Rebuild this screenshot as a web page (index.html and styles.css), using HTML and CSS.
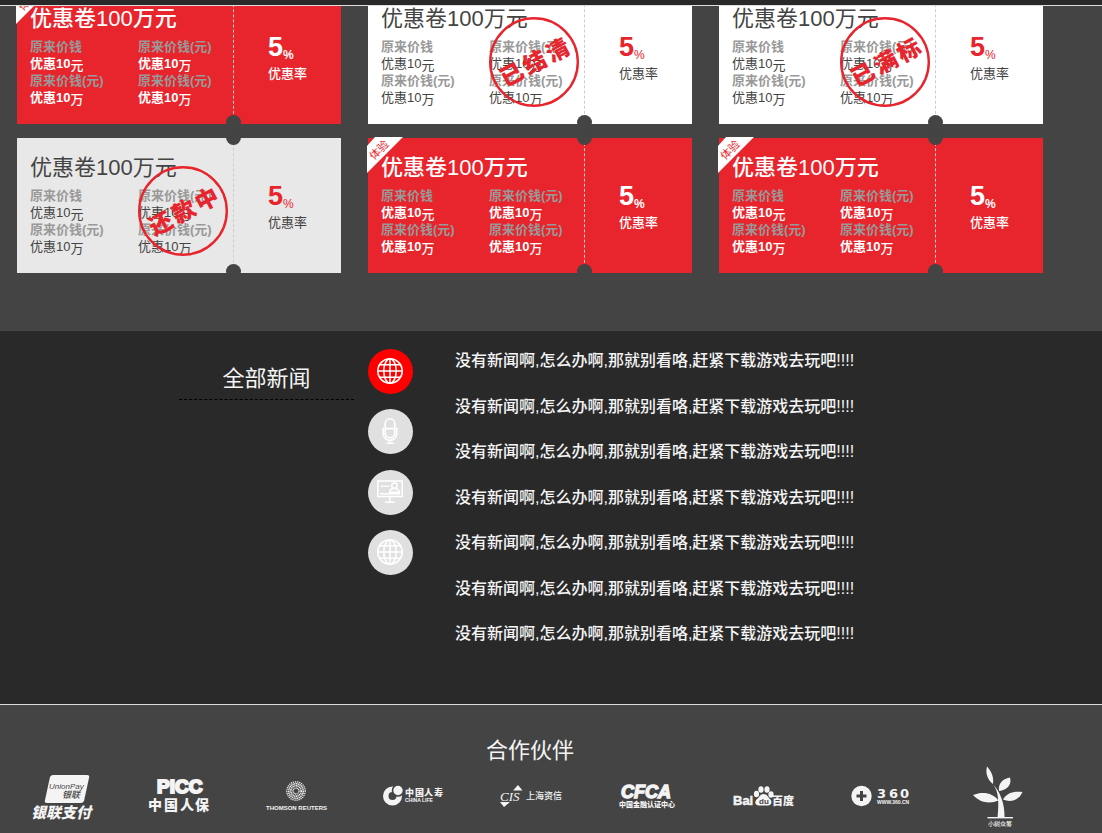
FILE: index.html
```html
<!DOCTYPE html>
<html lang="zh-CN">
<head>
<meta charset="utf-8">
<meta name="viewport" content="width=device-width, initial-scale=1">
<title>优惠卷</title>
<link rel="stylesheet" href="styles.css">
</head>
<body>
<svg class="defs" aria-hidden="true">
  <symbol id="globe" viewBox="0 0 26 26">
    <g fill="none" stroke="currentColor" stroke-width="1.6">
      <circle cx="13" cy="13" r="12.2"/>
      <ellipse cx="13" cy="13" rx="6.2" ry="12.2"/>
      <path d="M13 1v24M1 13h24M3 6.8h20M3 19.2h20"/>
    </g>
  </symbol>
</svg>
<header class="topbar"></header>
<main>
  <section class="coupons">
    <div class="coupon-grid">
      <article class="coupon coupon-red">
        <svg class="ribbon" viewBox="0 0 36 36"><path d="M8 0H36L0 36V9Z" fill="#fff"/><text x="12" y="17" transform="rotate(-45 12 13)">体验</text></svg>
        <div class="coupon-main">
          <h3>优惠卷100万元</h3>
          <dl>
            <div><dt>原来价钱</dt><dd>优惠10<sub>元</sub></dd></div>
            <div><dt>原来价钱(元)</dt><dd>优惠10<sub>万</sub></dd></div>
            <div><dt>原来价钱(元)</dt><dd>优惠10<sub>万</sub></dd></div>
            <div><dt>原来价钱(元)</dt><dd>优惠10<sub>万</sub></dd></div>
          </dl>
        </div>
        <div class="coupon-rate"><p class="rate">5<small>%</small></p><p>优惠率</p></div>
      </article>
      <article class="coupon">
        <div class="coupon-main">
          <h3>优惠卷100万元</h3>
          <dl>
            <div><dt>原来价钱</dt><dd>优惠10<sub>元</sub></dd></div>
            <div><dt>原来价钱(元)</dt><dd>优惠10<sub>万</sub></dd></div>
            <div><dt>原来价钱(元)</dt><dd>优惠10<sub>万</sub></dd></div>
            <div><dt>原来价钱(元)</dt><dd>优惠10<sub>万</sub></dd></div>
          </dl>
        </div>
        <div class="coupon-rate"><p class="rate">5<small>%</small></p><p>优惠率</p></div>
        <svg class="stamp" viewBox="0 0 90 90"><circle cx="45" cy="45" r="43.8"/><text x="8 34 60" y="54" transform="rotate(-28 45 45)">已结清</text></svg>
      </article>
      <article class="coupon">
        <div class="coupon-main">
          <h3>优惠卷100万元</h3>
          <dl>
            <div><dt>原来价钱</dt><dd>优惠10<sub>元</sub></dd></div>
            <div><dt>原来价钱(元)</dt><dd>优惠10<sub>万</sub></dd></div>
            <div><dt>原来价钱(元)</dt><dd>优惠10<sub>万</sub></dd></div>
            <div><dt>原来价钱(元)</dt><dd>优惠10<sub>万</sub></dd></div>
          </dl>
        </div>
        <div class="coupon-rate"><p class="rate">5<small>%</small></p><p>优惠率</p></div>
        <svg class="stamp" viewBox="0 0 90 90"><circle cx="45" cy="45" r="43.8"/><text x="8 34 60" y="54" transform="rotate(-28 45 45)">已满标</text></svg>
      </article>
      <article class="coupon coupon-gray">
        <div class="coupon-main">
          <h3>优惠卷100万元</h3>
          <dl>
            <div><dt>原来价钱</dt><dd>优惠10<sub>元</sub></dd></div>
            <div><dt>原来价钱(元)</dt><dd>优惠10<sub>万</sub></dd></div>
            <div><dt>原来价钱(元)</dt><dd>优惠10<sub>万</sub></dd></div>
            <div><dt>原来价钱(元)</dt><dd>优惠10<sub>万</sub></dd></div>
          </dl>
        </div>
        <div class="coupon-rate"><p class="rate">5<small>%</small></p><p>优惠率</p></div>
        <svg class="stamp" viewBox="0 0 90 90"><circle cx="45" cy="45" r="43.8"/><text x="8 34 60" y="54" transform="rotate(-28 45 45)">还款中</text></svg>
      </article>
      <article class="coupon coupon-red">
        <svg class="ribbon" viewBox="0 0 36 36"><path d="M8 0H36L0 36V9Z" fill="#fff"/><text x="12" y="17" transform="rotate(-45 12 13)">体验</text></svg>
        <div class="coupon-main">
          <h3>优惠卷100万元</h3>
          <dl>
            <div><dt>原来价钱</dt><dd>优惠10<sub>元</sub></dd></div>
            <div><dt>原来价钱(元)</dt><dd>优惠10<sub>万</sub></dd></div>
            <div><dt>原来价钱(元)</dt><dd>优惠10<sub>万</sub></dd></div>
            <div><dt>原来价钱(元)</dt><dd>优惠10<sub>万</sub></dd></div>
          </dl>
        </div>
        <div class="coupon-rate"><p class="rate">5<small>%</small></p><p>优惠率</p></div>
      </article>
      <article class="coupon coupon-red">
        <svg class="ribbon" viewBox="0 0 36 36"><path d="M8 0H36L0 36V9Z" fill="#fff"/><text x="12" y="17" transform="rotate(-45 12 13)">体验</text></svg>
        <div class="coupon-main">
          <h3>优惠卷100万元</h3>
          <dl>
            <div><dt>原来价钱</dt><dd>优惠10<sub>元</sub></dd></div>
            <div><dt>原来价钱(元)</dt><dd>优惠10<sub>万</sub></dd></div>
            <div><dt>原来价钱(元)</dt><dd>优惠10<sub>万</sub></dd></div>
            <div><dt>原来价钱(元)</dt><dd>优惠10<sub>万</sub></dd></div>
          </dl>
        </div>
        <div class="coupon-rate"><p class="rate">5<small>%</small></p><p>优惠率</p></div>
      </article>
    </div>
  </section>

  <section class="news">
    <h2 class="news-title">全部新闻</h2>
    <nav class="news-tabs">
      <button class="tab tab-active" type="button" aria-label="全部新闻"><svg><use href="#globe"/></svg></button>
      <button class="tab" type="button" aria-label="语音">
        <svg viewBox="0 0 26 26"><g fill="none" stroke="currentColor" stroke-width="1.6"><rect x="8.2" y=".8" width="9.6" height="19" rx="4.8"/><path d="M8.2 10.6h9.6M6.2 9.4v6.2a6.8 6.8 0 0 0 13.6 0V9.4M13 22v3M9.4 25.2h7.2"/></g></svg>
      </button>
      <button class="tab" type="button" aria-label="视频">
        <svg viewBox="0 0 26 26"><g fill="none" stroke="currentColor" stroke-width="1.5"><path d="M.8 2h24.4v15.4H.8zM3 14.8h20M13 17.4v5.4M8 23.2h10"/><circle cx="17.4" cy="6.6" r="2.7"/><path d="M12.6 13.2c0-5 9.6-5 9.6 0z"/><path d="M4 7.2h8.5" stroke-dasharray="2 .4"/></g></svg>
      </button>
      <button class="tab" type="button" aria-label="国际"><svg><use href="#globe"/></svg></button>
    </nav>
    <ul class="news-list">
      <li><a href="#">没有新闻啊,怎么办啊,那就别看咯,赶紧下载游戏去玩吧!!!!</a></li>
      <li><a href="#">没有新闻啊,怎么办啊,那就别看咯,赶紧下载游戏去玩吧!!!!</a></li>
      <li><a href="#">没有新闻啊,怎么办啊,那就别看咯,赶紧下载游戏去玩吧!!!!</a></li>
      <li><a href="#">没有新闻啊,怎么办啊,那就别看咯,赶紧下载游戏去玩吧!!!!</a></li>
      <li><a href="#">没有新闻啊,怎么办啊,那就别看咯,赶紧下载游戏去玩吧!!!!</a></li>
      <li><a href="#">没有新闻啊,怎么办啊,那就别看咯,赶紧下载游戏去玩吧!!!!</a></li>
      <li><a href="#">没有新闻啊,怎么办啊,那就别看咯,赶紧下载游戏去玩吧!!!!</a></li>
    </ul>
  </section>
</main>

<footer class="partners">
  <h2>合作伙伴</h2>
  <div class="logos">
    <svg viewBox="0 0 70 66" role="img" aria-label="银联支付">
      <path d="M26 9H60Q63 9 62 12L57 35Q56 37 54 37H20Q17 37 18 34L23 11Q24 9 26 9Z"/>
      <text class="ink" x="22" y="23" font-size="8" font-style="italic">UnionPay</text>
      <text class="ink" x="35" y="32" font-size="9" font-weight="500" font-style="italic">银联</text>
      <text x="4" y="52" font-size="15" font-weight="900" font-style="italic">银联支付</text>
    </svg>
    <svg viewBox="0 0 70 66" role="img" aria-label="中国人保">
      <text class="heavy" x="13" y="27" font-size="19" font-weight="700" stroke-width="2">PICC</text>
      <text x="4 20 36 51" y="44" font-size="14" font-weight="900">中国人保</text>
    </svg>
    <svg viewBox="0 0 70 66" role="img" aria-label="Thomson Reuters">
      <g fill="none" stroke="#f4f4f4">
        <circle cx="35" cy="25" r="9.2" stroke-width="1.2" stroke-dasharray="1.3 .8"/>
        <circle cx="35" cy="25" r="7.3" stroke-width="1.5" stroke-dasharray="1.3 .5"/>
        <circle cx="35" cy="25" r="5.2" stroke-width="1.6" stroke-dasharray="1.2 .5"/>
        <circle cx="35" cy="25" r="3" stroke-width="1.3" stroke-dasharray="1 .5"/>
      </g>
      <text x="5" y="44" font-size="6" font-weight="700">THOMSON REUTERS</text>
    </svg>
    <svg viewBox="0 0 70 66" role="img" aria-label="中国人寿">
      <path fill-rule="evenodd" d="M14.500 20.500a9.500 9.500 0 1 0 0 19a9.500 9.500 0 1 0 0-19M14.500 26a4 4 0 1 1 0 8a4 4 0 1 1 0-8"/>
      <circle cx="20" cy="24.500" r="5.500" stroke="#444" stroke-width="1.6"/>
      <text x="27 37 46 56" y="30" font-size="9" font-weight="900">中国人寿</text>
      <text x="27" y="36" font-size="5" font-weight="700">CHINA LIFE</text>
    </svg>
    <svg viewBox="0 0 70 66" role="img" aria-label="上海资信">
      <path d="M18 24.500L23 19L27.500 24.500ZM5 36H15L9 41Z"/>
      <text class="serif" x="5" y="35" font-size="13" font-style="italic">CIS</text>
      <text x="31" y="33" font-size="9" font-weight="500">上海资信</text>
    </svg>
    <svg viewBox="0 0 70 66" role="img" aria-label="中国金融认证中心">
      <text class="heavy" x="9" y="32" font-size="18" font-weight="700" font-style="italic" stroke-width="1.4">CFCA</text>
      <text x="35" y="41" text-anchor="middle" font-size="7" font-weight="900">中国金融认证中心</text>
    </svg>
    <svg viewBox="0 0 70 66" role="img" aria-label="百度">
      <text class="heavy" x="4" y="39" font-size="13" font-weight="700" stroke-width=".5">Bai</text>
      <ellipse cx="27.500" cy="28" rx="2.600" ry="3.200"/><ellipse cx="32" cy="23.500" rx="2.600" ry="3.200"/>
      <ellipse cx="38" cy="23.500" rx="2.600" ry="3.200"/><ellipse cx="42" cy="28.500" rx="2.600" ry="3.200"/>
      <path d="M34.500 28C38 28 39 31 41 33C44 36 42 39.500 39 39.500H30C26 39.500 25 36 28 33C31 31 31 28 34.500 28Z"/>
      <text class="ink" x="30" y="38" font-size="8" font-weight="700">du</text>
      <text x="43" y="39" font-size="11" font-weight="900">百度</text>
    </svg>
    <svg viewBox="0 0 70 66" role="img" aria-label="360">
      <circle cx="15.500" cy="30" r="10.200"/>
      <path d="M15.500 25v10M10.500 30h10" stroke="#444" stroke-width="3"/>
      <text class="wide" x="31 43 54" y="32" font-size="13" font-weight="700">360</text>
      <text x="31" y="38" font-size="5" font-weight="700">WWW.360.CN</text>
    </svg>
    <svg viewBox="0 0 70 66" role="img" aria-label="小树众筹">
      <path d="M24 .5C28 5 31 10 30 18C25 14 22 8 24 .5Z"/>
      <path d="M47 11.500C49 19 44 24 36 25C35 18 39 13 47 11.500Z"/>
      <path d="M10 29C20 25 30 27 35.500 34.500C27 38 17 37 10 29Z"/>
      <path d="M59.500 26C56 34 48 37 40 33.500C44 27 50 25 59.500 26Z"/>
      <path d="M30 18.500C36 25 36 38 34.500 51.500H41.500C42 38 37 25 30 18.500Z"/>
      <path d="M24.500 51h25.500v1.400H24.500z"/>
      <text x="37" y="60" text-anchor="middle" font-size="6" font-weight="500">小树众筹</text>
    </svg>
  </div>
</footer>
</body>
</html>
```
FILE: styles.css
```css
* { box-sizing: border-box; }
body, h2, h3, p, dl, dd, ul { margin: 0; padding: 0; }
body {
  background: #444;
  color: #444;
  font: 13px/17px "Liberation Sans", "Noto Sans CJK SC", sans-serif;
}
h2, h3 { font-size: 22px; line-height: 30px; font-weight: 400; }
ul { list-style: none; }
.defs { position: absolute; width: 0; height: 0; }

.topbar {
  height: 6px;
  background: #292929;
  border-bottom: 1px solid #ddd;
}

/* Coupons: the list is scrolled partly under the top bar */
.coupons { overflow: hidden; padding: 0 59px 58px 17px; }
.coupon-grid {
  display: grid;
  grid-template-columns: repeat(3, 1fr);
  gap: 14px 27px;
  margin-top: -17px;
}
.coupon {
  position: relative;
  display: grid;
  grid-template-columns: 2fr 1fr;
  min-height: 135px;
  background: #fff;
}
.coupon-gray { background: #e8e8e8; }
.coupon-red { background: #e8242c; color: #fff; }
.coupon-main { padding: 15px 0 0 13px; }
.coupon-main dl {
  display: grid;
  grid-template-columns: 108px 1fr;
  margin-top: 4px;
}
.coupon dt { font-weight: 700; color: #999; }
.coupon-red h3, .coupon-red p { font-weight: 500; }
.coupon-red dd { font-weight: 700; }
.coupon sub { font-size: 13px; font-weight: 400; line-height: 0; vertical-align: -2px; }
.coupon-red sub { font-weight: 500; }
.coupon-rate {
  position: relative;
  padding: 42px 0 0 34px;
  border-left: 1px dashed #ccc;
}
.coupon-rate::before,
.coupon-rate::after {
  content: "";
  position: absolute;
  left: -8px;
  width: 15px;
  height: 15px;
  border-radius: 50%;
  background: #444;
}
.coupon-rate::before { top: -8px; }
.coupon-rate::after { bottom: -6px; }
.coupon .rate {
  margin-bottom: 2px;
  color: #e8242c;
  font-size: 27px;
  line-height: 32px;
  font-weight: 700;
}
.rate small { font-size: 12px; font-weight: 400; vertical-align: -3px; line-height: 0; }
.coupon-red .rate { color: #fff; }
.coupon-red .rate small { font-weight: 700; }
.ribbon { position: absolute; top: -1px; left: -1px; width: 36px; height: 36px; }
.ribbon text { font-size: 11px; fill: #e8242c; text-anchor: middle; }
.stamp { position: absolute; top: 28px; left: 121px; width: 90px; height: 90px; }
.stamp circle { fill: none; stroke: #e8242c; stroke-width: 2.4; }
.stamp text { font-size: 23px; font-weight: 900; fill: #e8242c; }

/* News */
.news {
  display: grid;
  grid-template-columns: 175px 45px 1fr;
  column-gap: 14px;
  align-items: start;
  padding: 18px 17px 58px 179px;
  background: #292929;
  color: #f4f4f4;
}
.news-title {
  margin-top: 15px;
  padding-bottom: 5px;
  border-bottom: 1px dashed #000;
  text-align: center;
}
.news-tabs {
  display: flex;
  flex-direction: column;
  justify-content: space-between;
  min-height: 226px;
}
.tab {
  display: grid;
  place-items: center;
  width: 45px;
  height: 45px;
  padding: 0 1px 1px 0;
  border: 0;
  border-radius: 50%;
  background: #e0e0e0;
  color: #fff;
}
.tab-active { background: #f00; }
.tab svg { width: 26px; height: 26px; }
.news-list {
  display: flex;
  flex-direction: column;
  justify-content: space-between;
  min-height: 297px;
  padding-left: 28px;
  font-size: 16px;
  line-height: 24px;
  font-weight: 500;
}
.news-list a { color: inherit; text-decoration: none; }

/* Partners */
.partners {
  padding: 31px 45px 0 3px;
  border-top: 1px solid #ddd;
  color: #f4f4f4;
}
.partners h2 { text-align: center; }
.logos {
  display: grid;
  grid-template-columns: repeat(9, 1fr);
  justify-items: center;
}
.logos svg { display: block; width: 70px; height: 66px; fill: #f4f4f4; }
.logos .ink { fill: #444; }
.logos .heavy { stroke: #f4f4f4; }
.logos .serif { font-family: "Liberation Serif", serif; }
.logos .wide { font-family: "DejaVu Sans", sans-serif; }
```
